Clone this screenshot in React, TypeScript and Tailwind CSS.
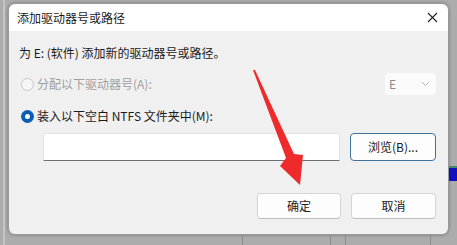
import React from "react";

const font = { fontFamily: '"Noto Sans CJK SC", "Noto Sans", sans-serif' };

const Radio = ({ checked, disabled }: { checked?: boolean; disabled?: boolean }) =>
  checked ? (
    <span className="w-[13px] h-[13px] rounded-full bg-[#0a5fb4] flex items-center justify-center shrink-0">
      <span className="w-[5px] h-[5px] rounded-full bg-white"></span>
    </span>
  ) : (
    <span
      className={
        "w-[13px] h-[13px] rounded-full border shrink-0 " +
        (disabled ? "border-[#c6c6c6] bg-[#f6f6f6]" : "border-[#8a8a8a] bg-white")
      }
    ></span>
  );

const Button = ({ label, focus }: { label: string; focus?: boolean }) => (
  <div
    className={
      "h-full flex items-center justify-center rounded-[4px] bg-[#fdfdfd] text-[12px] text-[#1b1b1b] border " +
      (focus ? "border-[#41729c]" : "border-[#d5d5d5] border-b-[#bdbdbd]")
    }
  >
    {label}
  </div>
);

const App = () => {
  return (
    <div
      className="w-[457px] h-[245px] bg-[#acacac] relative overflow-hidden pl-[8px] pt-[3px]"
      style={font}
    >
      {/* desktop bits behind the window */}
      <div className="absolute left-[3px] top-0 w-[2px] h-full bg-[#c4c4c4]"></div>
      <div className="absolute right-0 top-[166px] w-[8px] h-[2px] bg-[#3c8a6a]"></div>
      <div className="absolute right-0 top-[168px] w-[8px] h-[13px] bg-[#1010c0]"></div>
      <div className="absolute left-[242px] bottom-0 w-[1px] h-[10px] bg-[#8c8c8c]"></div>
      <div className="absolute left-[330px] bottom-0 w-[1px] h-[10px] bg-[#8c8c8c]"></div>
      <div className="absolute left-[345px] bottom-0 w-[1px] h-[10px] bg-[#8c8c8c]"></div>
      <div className="absolute left-[430px] bottom-0 w-[1px] h-[10px] bg-[#8c8c8c]"></div>

      <div className="w-[441px] rounded-[7px] overflow-hidden shadow-[0_0_3px_rgba(0,0,0,0.35)] border border-[#9a9a9a]">
        {/* title bar */}
        <div className="h-[27px] bg-white flex items-center justify-between pl-[8px] pr-[10px]">
          <span className="text-[12px] text-[#1b1b1b]">添加驱动器号或路径</span>
          <svg width="11" height="11" viewBox="0 0 11 11">
            <path d="M1 1L10 10M10 1L1 10" stroke="#222" strokeWidth="1.1" />
          </svg>
        </div>

        {/* body */}
        <div className="bg-[#f0f0f0] pl-[10px] pr-[12px] pt-[15px] pb-[15px] flex flex-col">
          <div className="h-[14px] leading-[14px] text-[12px] text-[#1b1b1b]">
            为 E: (软件) 添加新的驱动器号或路径。
          </div>

          <div className="mt-[13px] h-[22px] flex items-center justify-between">
            <div className="flex items-center gap-[3px] pl-[2px]">
              <Radio disabled />
              <span className="text-[12px] text-[#9f9f9f]">分配以下驱动器号(A):</span>
            </div>
            <div className="w-[51px] h-full bg-[#fbfbfb] flex items-center justify-between pl-[4px] pr-[6px] rounded-[3px]">
              <span className="text-[12px] text-[#8a8a8a]">E</span>
              <svg width="9" height="6" viewBox="0 0 9 6">
                <path d="M1 1L4.5 4.5L8 1" stroke="#b5b5b5" strokeWidth="1" fill="none" />
              </svg>
            </div>
          </div>

          <div className="mt-[13px] h-[16px] flex items-center gap-[3px] pl-[2px]">
            <Radio checked />
            <span className="text-[12px] text-[#1b1b1b]">装入以下空白 NTFS 文件夹中(M):</span>
          </div>

          <div className="mt-[9px] h-[28px] flex gap-[10px] pl-[24px]">
            <div className="flex-1 bg-white rounded-t-[3px] border border-[#e4e4e4] border-b-[#6f6f6f]"></div>
            <div className="w-[86px]">
              <Button label="浏览(B)..." focus />
            </div>
          </div>

          <div className="mt-[32px] h-[26px] flex justify-end gap-[10px]">
            <div className="w-[84px]">
              <Button label="确定" />
            </div>
            <div className="w-[85px]">
              <Button label="取消" />
            </div>
          </div>
        </div>
      </div>

      {/* red annotation arrow */}
      <svg className="absolute left-0 top-0" width="457" height="245" viewBox="0 0 457 245">
        <polygon
          points="253,70 286,158 280,166 300,185 303,155 294,154 255,70"
          fill="#ee2a2a"
        />
      </svg>
    </div>
  );
};

export default App;
